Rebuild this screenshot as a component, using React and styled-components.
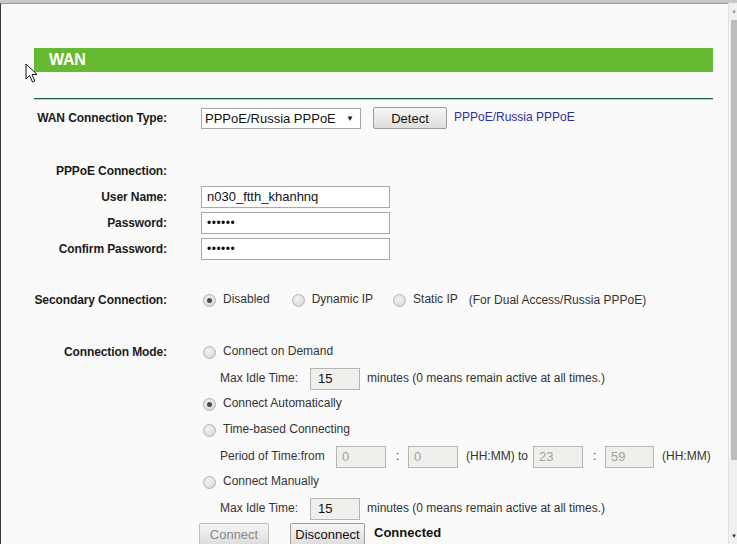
import React from "react";
import styled, { createGlobalStyle } from "styled-components";

const GlobalStyle = createGlobalStyle`
  html, body {
    margin: 0;
    padding: 0;
    background: #fafafa;
  }
  body {
    font-family: "Liberation Sans", Arial, sans-serif;
    font-size: 12px;
    color: #222;
  }
`;

function Radio({ checked }) {
  return <RadioDot $checked={checked} />;
}

function FieldLabel({ children, h }) {
  return (
    <Label $h={h}>
      <span>{children}</span>
    </Label>
  );
}

export default function App() {
  return (
    <Window>
      <GlobalStyle />
      <Content>
        <TitleBar>WAN</TitleBar>
        <Divider />

        <Row $mt={7} $h={22}>
          <FieldLabel>WAN Connection Type:</FieldLabel>
          <Field>
            <Select>
              <span>PPPoE/Russia PPPoE</span>
              <Arrow>▼</Arrow>
            </Select>
            <Button $w={74} $ml={12}>Detect</Button>
            <Hint>PPPoE/Russia PPPoE</Hint>
          </Field>
        </Row>

        <Row $mt={31} $h={22}>
          <FieldLabel>PPPoE Connection:</FieldLabel>
        </Row>
        <Row $mt={2} $h={26}>
          <FieldLabel>User Name:</FieldLabel>
          <Field>
            <TextBox>n030_ftth_khanhnq</TextBox>
          </Field>
        </Row>
        <Row $h={26}>
          <FieldLabel>Password:</FieldLabel>
          <Field>
            <TextBox $dots>••••••</TextBox>
          </Field>
        </Row>
        <Row $h={26}>
          <FieldLabel>Confirm Password:</FieldLabel>
          <Field>
            <TextBox $dots>••••••</TextBox>
          </Field>
        </Row>

        <Row $mt={27} $h={22}>
          <FieldLabel>Secondary Connection:</FieldLabel>
          <Field>
            <Option $mr={20}>
              <Radio checked />
              Disabled
            </Option>
            <Option $mr={18}>
              <Radio />
              Dynamic IP
            </Option>
            <Option $mr={11}>
              <Radio />
              Static IP
            </Option>
            <Text>(For Dual Access/Russia PPPoE)</Text>
          </Field>
        </Row>

        <Row $mt={28} $top>
          <FieldLabel h={26}>Connection Mode:</FieldLabel>
          <Stack>
            <Line>
              <Option>
                <Radio />
                Connect on Demand
              </Option>
            </Line>
            <Line $indent>
              <Text $w={90}>Max Idle Time:</Text>
              <SmallBox>15</SmallBox>
              <Text $ml={7}>minutes (0 means remain active at all times.)</Text>
            </Line>
            <Line>
              <Option>
                <Radio checked />
                Connect Automatically
              </Option>
            </Line>
            <Line>
              <Option>
                <Radio />
                Time-based Connecting
              </Option>
            </Line>
            <Line $indent>
              <Text $w={116}>Period of Time:from</Text>
              <SmallBox $w={50} $faded>0</SmallBox>
              <Text $ml={10} $w={12}>:</Text>
              <SmallBox $w={50} $faded>0</SmallBox>
              <Text $ml={8} $w={67}>(HH:MM) to</Text>
              <SmallBox $w={50} $faded>23</SmallBox>
              <Text $ml={10} $w={12}>:</Text>
              <SmallBox $w={49} $faded>59</SmallBox>
              <Text $ml={8}>(HH:MM)</Text>
            </Line>
            <Line>
              <Option>
                <Radio />
                Connect Manually
              </Option>
            </Line>
            <Line $indent>
              <Text $w={90}>Max Idle Time:</Text>
              <SmallBox>15</SmallBox>
              <Text $ml={7}>minutes (0 means remain active at all times.)</Text>
            </Line>
            <Line $pull>
              <Button $w={70} $disabled>Connect</Button>
              <Button $w={75} $ml={21}>Disconnect</Button>
              <Status>Connected</Status>
            </Line>
          </Stack>
        </Row>

        <Cursor width="13" height="20" viewBox="0 0 13 20">
          <path
            d="M1 1 L1 16 L4.5 12.5 L7.5 19 L9.8 18 L7 11.5 L12 11.5 Z"
            fill="#fff"
            stroke="#111"
            strokeWidth="1"
            strokeLinejoin="round"
          />
        </Cursor>
      </Content>
      <ScrollBar>
        <ScrollArrow>▲</ScrollArrow>
        <Thumb />
        <ScrollArrow $bottom>▼</ScrollArrow>
      </ScrollBar>
    </Window>
  );
}

const Window = styled.div`
  position: relative;
  display: flex;
  width: 737px;
  height: 544px;
  overflow: hidden;
  border-top: 3px solid #c9c9c9;
  box-sizing: border-box;
  background: #fafafa;
`;

const Content = styled.div`
  position: relative;
  flex: 1;
  border-left: 1px solid #3a3a3a;
  border-top: 1px solid #9a9a9a;
  padding: 44px 15px 0 33px;
`;

const TitleBar = styled.div`
  height: 24px;
  background: #66b933;
  color: #fff;
  font: bold 16px/24px "Liberation Sans", Arial, sans-serif;
  padding-left: 15px;
  letter-spacing: -0.3px;
`;

const Divider = styled.div`
  margin-top: 26px;
  height: 1px;
  background: #1f5e48;
  border-bottom: 1px solid #b9cfc4;
`;

const Row = styled.div`
  display: flex;
  align-items: ${(p) => (p.$top ? "flex-start" : "center")};
  margin-top: ${(p) => p.$mt || 0}px;
  height: ${(p) => (p.$h ? `${p.$h}px` : "auto")};
`;

const Label = styled.div`
  display: flex;
  justify-content: flex-end;
  width: 133px;
  flex: 0 0 133px;
  white-space: nowrap;
  font-weight: bold;
  letter-spacing: -0.1px;
  color: #1a1a1a;
  line-height: ${(p) => p.$h || 16}px;
`;

const Field = styled.div`
  display: flex;
  align-items: center;
  margin-left: 34px;
`;

const Stack = styled.div`
  display: flex;
  flex-direction: column;
  margin-left: 34px;
`;

const Line = styled.div`
  display: flex;
  align-items: center;
  height: 26px;
  padding-left: ${(p) => (p.$indent ? 19 : 0)}px;
  margin-left: ${(p) => (p.$pull ? -2 : 0)}px;
`;

const Select = styled.div`
  display: flex;
  align-items: center;
  justify-content: space-between;
  width: 160px;
  height: 21px;
  box-sizing: border-box;
  border: 1px solid #a5a5a5;
  background: #fff;
  padding: 0 6px 0 3px;
  font-size: 13px;
  color: #111;
`;

const Arrow = styled.span`
  font-size: 8px;
  color: #222;
`;

const Button = styled.div`
  display: flex;
  align-items: center;
  justify-content: center;
  width: ${(p) => p.$w}px;
  height: 22px;
  margin-left: ${(p) => p.$ml || 0}px;
  box-sizing: border-box;
  border: 1px solid ${(p) => (p.$disabled ? "#bdbdbd" : "#9c9c9c")};
  border-radius: 2px;
  background: linear-gradient(#f6f6f6, #dedede);
  font-size: 13px;
  color: ${(p) => (p.$disabled ? "#8a8a8a" : "#111")};
`;

const Hint = styled.span`
  margin-left: 7px;
  margin-top: -3px;
  color: #2f2f9a;
`;

const TextBox = styled.div`
  width: 189px;
  height: 22px;
  box-sizing: border-box;
  border: 1px solid #a9a9a9;
  background: #fff;
  padding-left: 5px;
  font-size: ${(p) => (p.$dots ? 12 : 13)}px;
  line-height: 20px;
  color: #111;
  letter-spacing: ${(p) => (p.$dots ? 0.5 : 0)}px;
`;

const SmallBox = styled.div`
  width: ${(p) => p.$w || 50}px;
  height: 22px;
  box-sizing: border-box;
  border: 1px solid #b5b5b5;
  background: #efefeb;
  padding-left: ${(p) => (p.$faded ? 5 : 7)}px;
  font-size: 13px;
  line-height: 20px;
  margin-top: 2px;
  color: ${(p) => (p.$faded ? "#a3a3a3" : "#111")};
`;

const Text = styled.span`
  display: inline-block;
  width: ${(p) => (p.$w ? `${p.$w}px` : "auto")};
  margin-left: ${(p) => p.$ml || 0}px;
  color: #333;
  white-space: nowrap;
`;

const Option = styled.label`
  display: inline-flex;
  align-items: center;
  margin-right: ${(p) => p.$mr || 0}px;
  color: #333;
  margin-top: -3px;
`;

const RadioDot = styled.span`
  position: relative;
  display: inline-block;
  width: 11px;
  height: 11px;
  margin: 3px 7px 0 2px;
  border-radius: 50%;
  border: 1px solid #b4b4b4;
  background: radial-gradient(circle at 40% 35%, #f4f4f4, #d2d2d2);
  &::after {
    content: "";
    display: ${(p) => (p.$checked ? "block" : "none")};
    position: absolute;
    left: 3px;
    top: 3px;
    width: 5px;
    height: 5px;
    border-radius: 50%;
    background: #4a4a4a;
  }
`;

const Status = styled.span`
  margin-left: 9px;
  margin-top: -3px;
  font-weight: bold;
  font-size: 13px;
  color: #111;
`;

const Cursor = styled.svg`
  position: absolute;
  left: 24px;
  top: 59px;
`;

const ScrollBar = styled.div`
  display: flex;
  flex-direction: column;
  width: 8px;
  border-left: 1px solid #e3e3e3;
  background: #f0f0f0;
`;

const ScrollArrow = styled.div`
  height: ${(p) => (p.$bottom ? 10 : 17)}px;
  font-size: 6px;
  line-height: ${(p) => (p.$bottom ? 10 : 17)}px;
  text-align: right;
  margin-top: ${(p) => (p.$bottom ? "auto" : 0)};
  margin-bottom: ${(p) => (p.$bottom ? 3 : 0)}px;
  color: ${(p) => (p.$bottom ? "#333" : "#999")};
`;

const Thumb = styled.div`
  margin-left: 2px;
  height: 440px;
  background: #bdbdbd;
`;
